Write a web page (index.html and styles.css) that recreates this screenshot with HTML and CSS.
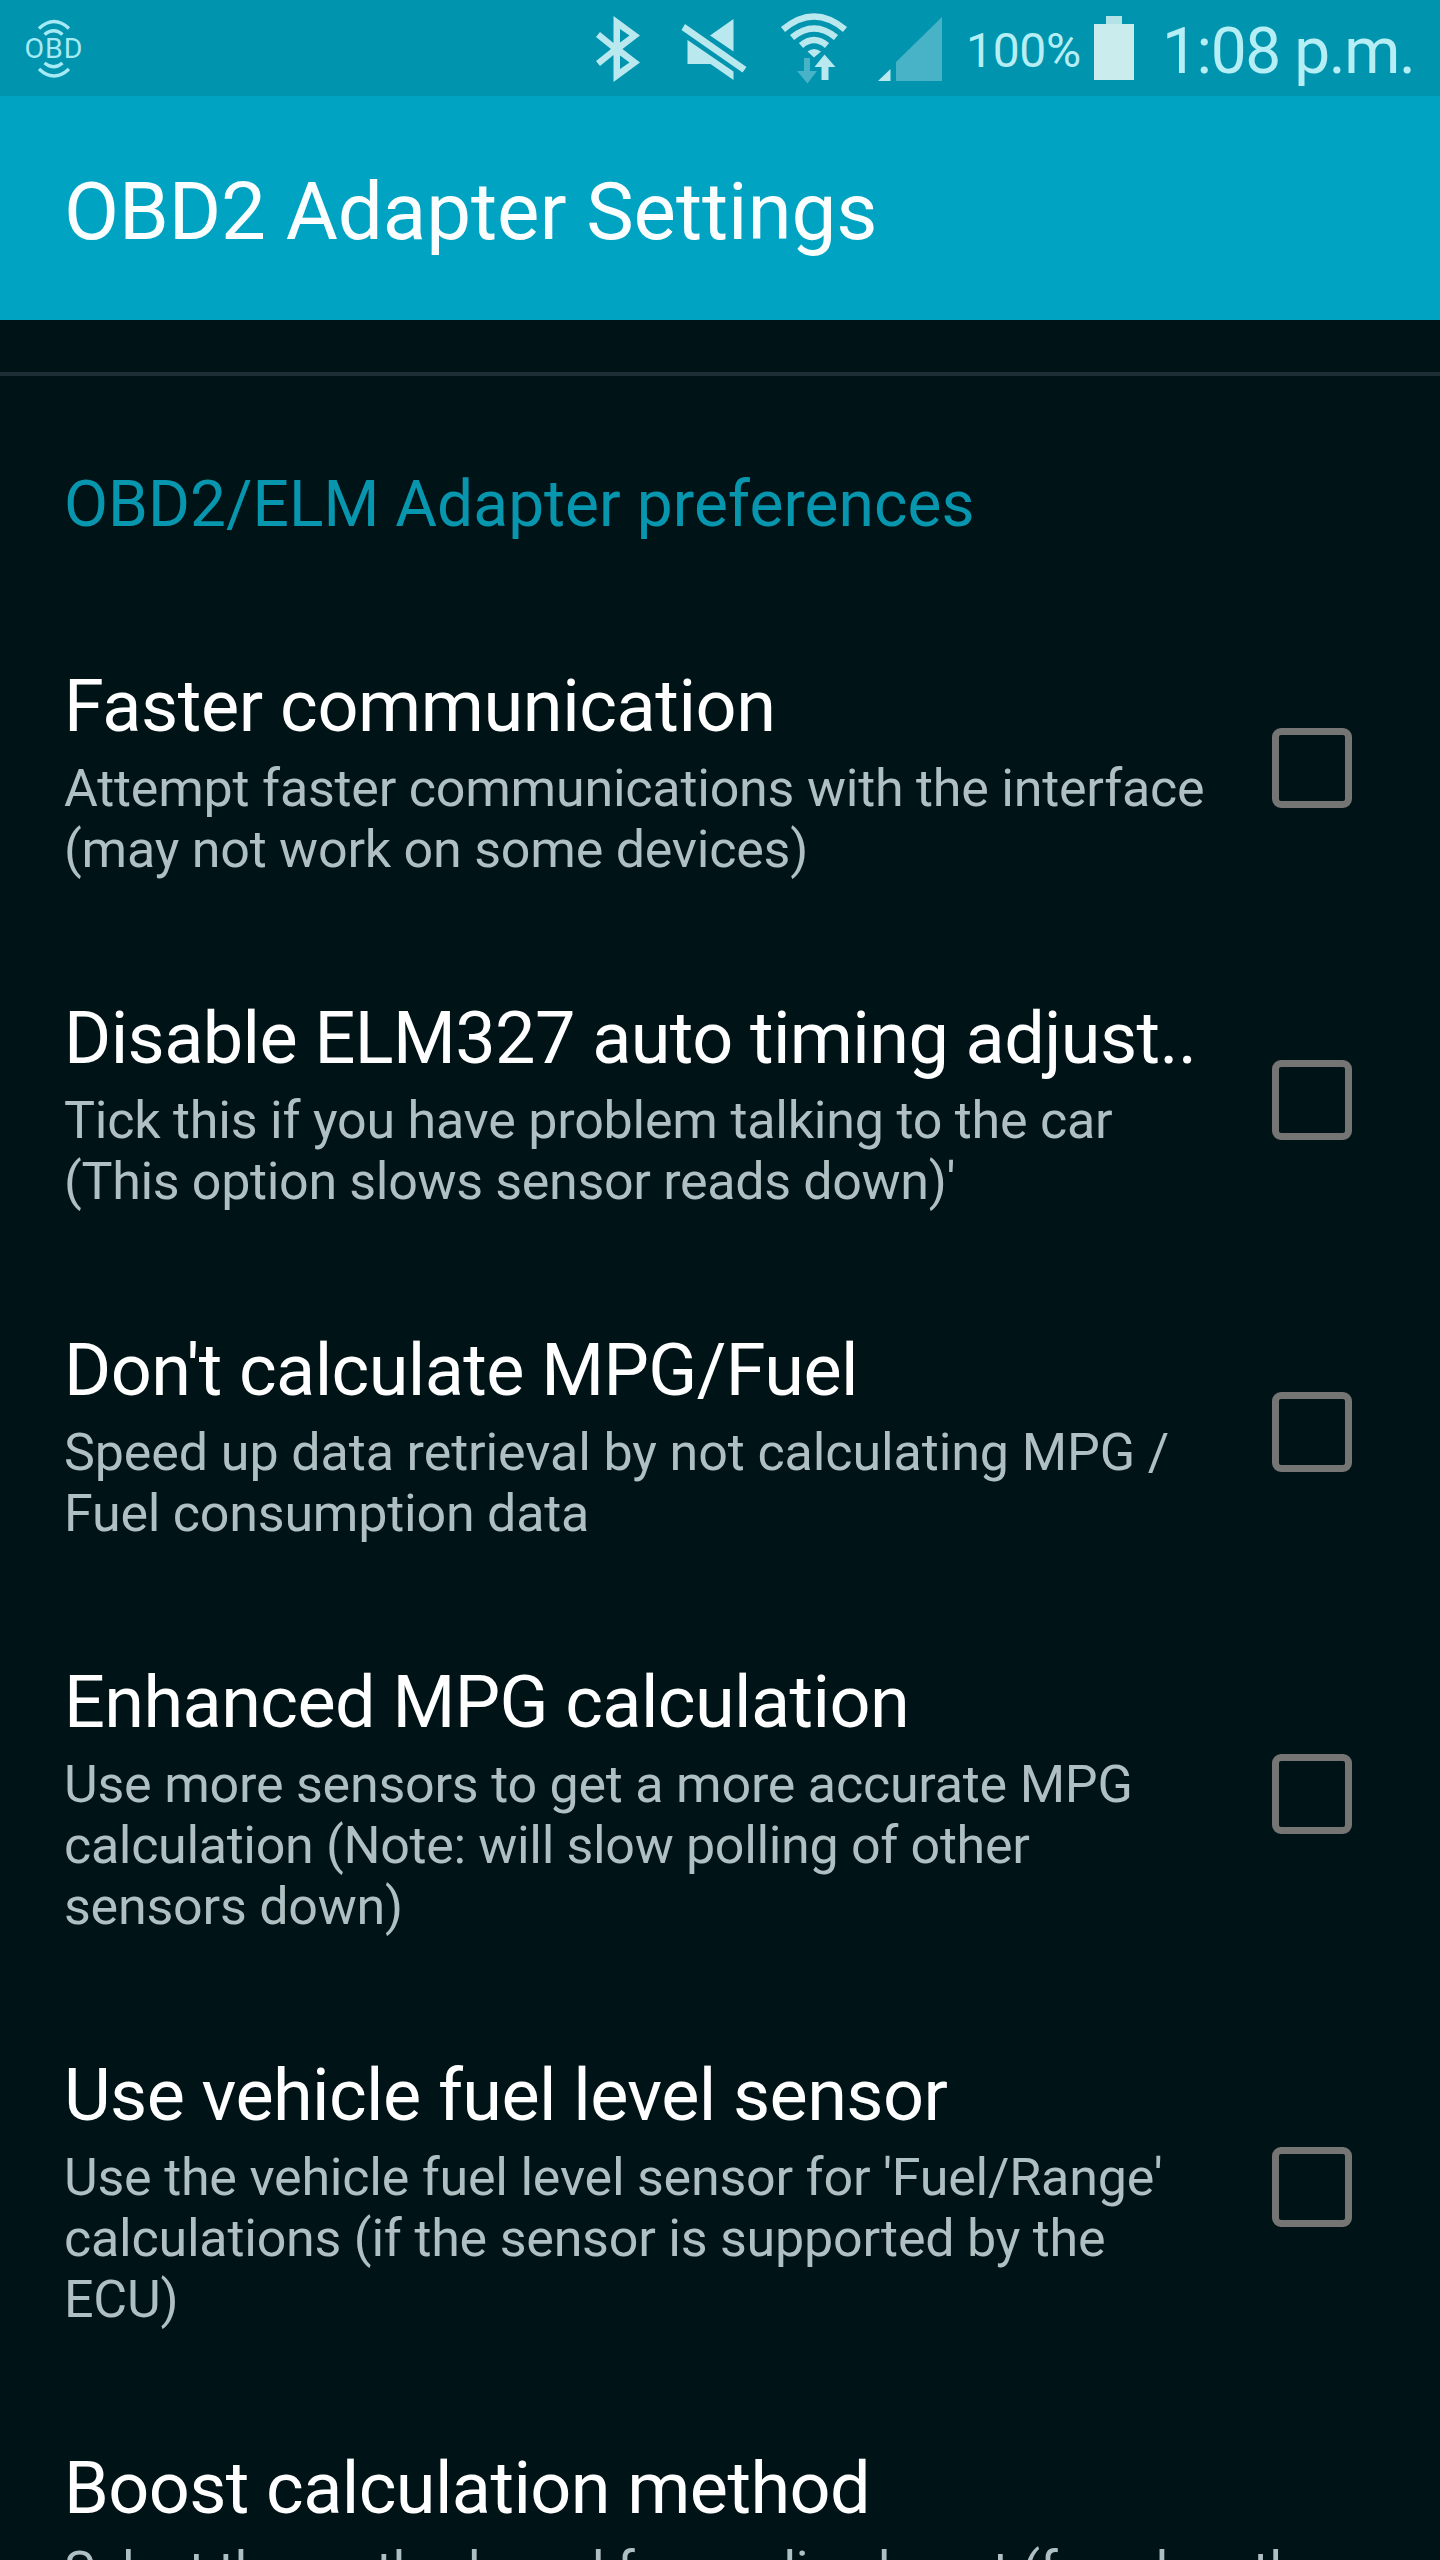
FILE: index.html
```html
<!DOCTYPE html>
<html lang="en">
<head>
<meta charset="utf-8">
<title>OBD2 Adapter Settings</title>
<link rel="stylesheet" href="styles.css">
</head>
<body>
<div class="screen">
  <div class="statusbar">
    <svg class="obd" width="64" height="64" viewBox="0 0 64 64" fill="none" stroke="#a5eaf4" stroke-width="3.4">
      <path d="M17 12.5Q32 -1.5 47 12.5M22.500 18.500Q32 11 40.500 18.500M22.500 47Q32 54.500 40.500 47M17 53Q32 67 47 53"/>
      <text x="31.500" y="42" class="obd-label" text-anchor="middle" textLength="58">OBD</text>
    </svg>
    <svg class="status-icons" width="360" height="96" viewBox="590 0 360 96" fill="#b9e8ef">
      <path fill-rule="evenodd" d="M613.500 16L640 35.500L622.500 49L640 62.500L613.500 82V55L600 66L596 61L611 49L596 37L600 32L613.500 43ZM620 29V42.500L629.500 35.500ZM620 55.500V69L629.500 62.500Z"/>
      <path d="M685 24L746.500 67L742.500 72.500L681.500 30ZM733.500 19V51.500L710 35.500ZM687.500 40L733.500 71.500V80L710.500 64H687.500Z"/>
      <g fill="none" stroke="#b9e8ef">
        <path stroke-width="6.500" d="M783 29.500Q814 3.500 845 29.500"/>
        <path stroke-width="6.500" d="M792 37.500Q814 19.500 836 37.500"/>
        <path stroke-width="6.500" d="M801 45.500Q814 34.500 827 45.500"/>
      </g>
      <path d="M807.500 51.500Q814 46.500 821 51.500L814 57.500ZM824.500 54.500L835.500 67H828.500V80H821.500V67H814.500Z"/>
      <path fill="#48b2c6" d="M804 58H810V71H817L807.500 83.500L797 71H804ZM896 62L942 17V81H896Z"/>
      <path d="M878 81L890.500 69V81Z"/>
    </svg>
    <span class="percent">100%</span>
    <svg class="battery" width="40" height="64" viewBox="0 0 40 64"><path fill="#b3e2e7" d="M12 0H28V8H12Z"/><path fill="#caecec" d="M0 8H40V64H0Z"/></svg>
    <span class="time">1:08 p.m.</span>
  </div>
  <header class="appbar">OBD2 Adapter Settings</header>
  <main>
    <h2 class="category">OBD2/ELM Adapter preferences</h2>
    <section class="row"><div class="text"><h3 class="wide">Faster communication</h3><p>Attempt faster communications with the interface<br>(may not work on some devices)</p></div><span class="check"></span></section>
    <section class="row"><div class="text"><h3>Disable ELM327 auto timing adjust..</h3><p>Tick this if you have problem talking to the car<br><span class="tight">(This option slows sensor reads down)'</span></p></div><span class="check"></span></section>
    <section class="row"><div class="text"><h3>Don't calculate MPG/Fuel</h3><p><span class="loose">Speed up data retrieval by not calculating MPG /</span><br>Fuel consumption data</p></div><span class="check"></span></section>
    <section class="row tall"><div class="text"><h3>Enhanced MPG calculation</h3><p>Use more sensors to get a more accurate MPG<br><span class="tight">calculation (Note: will slow polling of other</span><br>sensors down)</p></div><span class="check"></span></section>
    <section class="row tall"><div class="text"><h3>Use vehicle fuel level sensor</h3><p>Use the vehicle fuel level sensor for 'Fuel/Range'<br>calculations (if the sensor is supported by the<br>ECU)</p></div><span class="check"></span></section>
    <section class="row"><div class="text"><h3>Boost calculation method</h3><p>Select the method used for reading boost (for when the</p></div></section>
  </main>
</div>
</body>
</html>
```

FILE: styles.css
```css
* { box-sizing: border-box; }
body { margin: 0; background: #001418; font-family: Roboto, sans-serif; }
.screen { width: 1440px; height: 2560px; overflow: hidden; }
h2, h3, p { margin: 0; font-weight: 400; white-space: nowrap; }

.statusbar {
  display: flex;
  height: 96px;
  padding: 0 20px 0 22px;
  background: #0094ae;
  color: #b5eef5;
  white-space: nowrap;
}
.obd { flex: none; margin-top: 16px; overflow: visible; }
.obd-label { font-size: 28.5px; fill: #a5eaf4; stroke: none; }
.status-icons { flex: none; margin-left: 504px; }
.percent {
  flex: none;
  width: 128px;
  margin-left: 16px;
  font-size: 48px;
  line-height: 56px;
  padding-top: 23px;
  letter-spacing: -0.3px;
}
.battery { flex: none; margin-top: 16px; }
.time {
  margin-left: 28px;
  padding-top: 14px;
  font-size: 64px;
  line-height: 76px;
  letter-spacing: -1.4px;
}

.appbar {
  height: 224px;
  padding: 69px 64px 0;
  background: #00a4c2;
  color: #fafefe;
  font-size: 80px;
  line-height: 94px;
  letter-spacing: -0.1px;
}

main { padding-top: 52px; }
.category {
  height: 230px;
  padding: 91px 64px 0;
  border-top: 4px solid #1d2f35;
  color: #0796ae;
  font-size: 64px;
  line-height: 76px;
  letter-spacing: 0.05px;
}

.row {
  display: flex;
  align-items: center;
  justify-content: space-between;
  padding: 0 88px 0 64px;
}
.text { padding: 63px 0 54px; }
h3 {
  color: #fff;
  font-size: 72px;
  line-height: 84px;
  letter-spacing: -0.58px;
}
h3.wide { letter-spacing: -0.4px; }
p {
  margin-top: 9px;
  color: #b0bfc1;
  font-size: 52px;
  line-height: 61px;
  letter-spacing: -0.22px;
}
.tight { letter-spacing: -0.33px; }
.loose { letter-spacing: -0.1px; }
.check {
  width: 80px;
  height: 80px;
  border: 7px solid #757573;
  border-radius: 9px;
}
.tall .check { margin-bottom: 1px; }
```
